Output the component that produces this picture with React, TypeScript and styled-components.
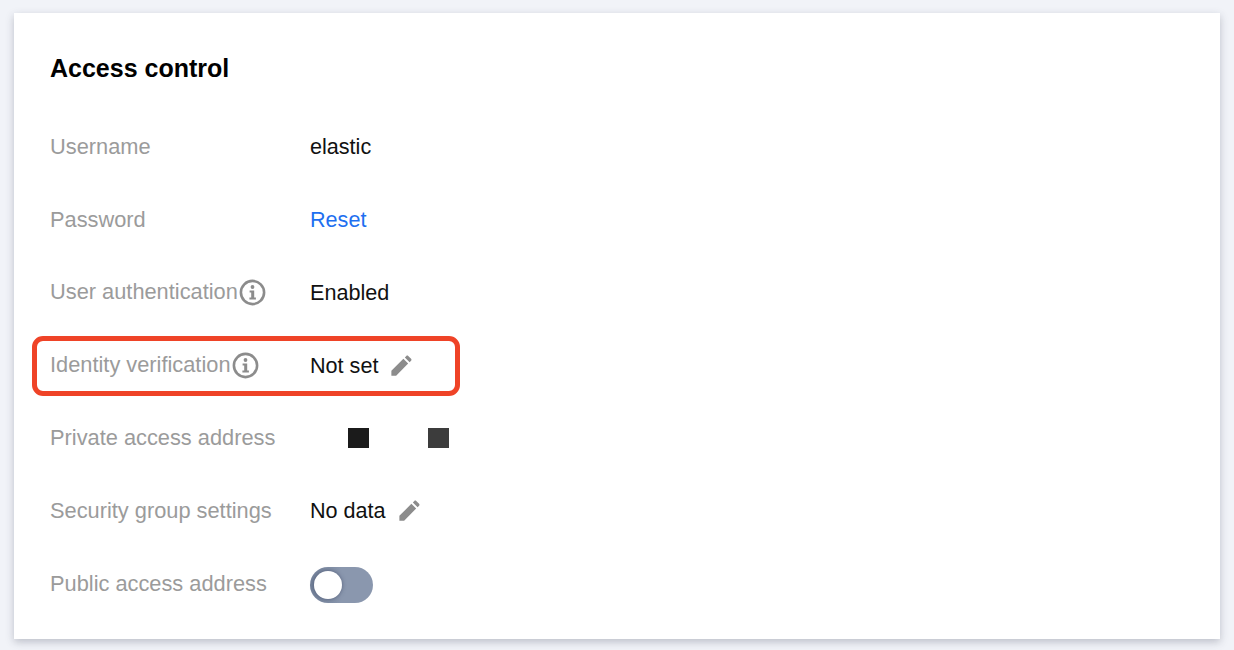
import styled, { createGlobalStyle } from 'styled-components'
import { ReactElement } from 'react'

const GlobalStyle = createGlobalStyle`
  html, body {
    margin: 0;
    height: 100%;
    background: #f1f3f8;
    font-family: "Liberation Sans", Arial, sans-serif;
  }
`

const Page = styled.div`
  width: 1234px;
  height: 650px;
  padding: 13px 14px 11px;
  box-sizing: border-box;
  overflow: hidden;
`

const Card = styled.section`
  position: relative;
  height: 100%;
  box-sizing: border-box;
  padding: 40px 36px 0;
  background: #fff;
  box-shadow: 0 3px 8px rgba(54, 58, 80, 0.28);
`

const Title = styled.h2`
  margin: 0 0 28px;
  font-size: 25px;
  line-height: 30px;
  font-weight: 700;
  color: #000;
`

const Rows = styled.div`
  display: flex;
  flex-direction: column;
`

const Row = styled.div`
  display: flex;
  align-items: center;
  height: 72.8px;
`

const Label = styled.div`
  display: flex;
  align-items: center;
  width: 260px;
  margin-top: -1px;
  font-size: 21.8px;
  line-height: 30px;
  color: #9b9b9b;
`

const Value = styled.div`
  display: flex;
  align-items: center;
  font-size: 21.6px;
  line-height: 30px;
  color: #111;
`

const ResetLink = styled.a`
  color: #1e6ff0;
  text-decoration: none;
`

const PrivateAddress = styled.div`
  display: flex;
  gap: 59px;
  margin: -2px 0 0 38px;
`

const MaskBlock = styled.span<{ $shade: string }>`
  display: block;
  width: 21px;
  height: 20px;
  background: ${p => p.$shade};
`

const Toggle = styled.span`
  position: relative;
  display: block;
  width: 63px;
  height: 36px;
  border-radius: 18px;
  background: linear-gradient(90deg, #74829a 0, #8a97ae 50%);
  margin-top: 2px;
`

const Knob = styled.span`
  position: absolute;
  left: 4px;
  top: 4px;
  width: 28px;
  height: 28px;
  border-radius: 50%;
  background: #fff;
  box-shadow: 0 0 4px rgba(50, 60, 90, 0.6);
`

const Highlight = styled.div`
  position: absolute;
  left: 17.5px;
  top: 323px;
  width: 428.5px;
  height: 60px;
  box-sizing: border-box;
  border: 5px solid #ef4327;
  border-radius: 11px;
  pointer-events: none;
`

const IconSlot = styled.svg<{ $gap: number }>`
  flex: none;
  margin-left: ${p => p.$gap}px;
`

function InfoIcon (): ReactElement {
  return <IconSlot $gap={1} width="27" height="27" viewBox="0 0 27 27">
    <circle cx="13.5" cy="13.5" r="11.6" fill="none" stroke="#8c8c8c" strokeWidth="2.6" />
    <circle cx="13.5" cy="8" r="1.9" fill="#8c8c8c" />
    <path d="M10.6 11.4h4.6v7.2h1.7v2H10.4v-2h1.8v-5.2h-1.6z" fill="#8c8c8c" />
  </IconSlot>
}

function PencilIcon (): ReactElement {
  return <IconSlot $gap={12} width="22" height="22" viewBox="0 0 24 24">
    <path d="M1.5 22.5v-5.2L14.6 4.2l5.2 5.2L6.7 22.5zM16.2 2.6l1.6-1.6c.6-.6 1.5-.6 2.1 0l3.1 3.1c.6.6.6 1.5 0 2.1l-1.6 1.6z" fill="#8c8c8c" />
  </IconSlot>
}

export default function App (): ReactElement {
  return <Page>
    <GlobalStyle />
    <Card>
      <Title>Access control</Title>
      <Rows>
        <Row>
          <Label>Username</Label>
          <Value>elastic</Value>
        </Row>
        <Row>
          <Label>Password</Label>
          <Value><ResetLink href="#">Reset</ResetLink></Value>
        </Row>
        <Row>
          <Label>User authentication<InfoIcon /></Label>
          <Value>Enabled</Value>
        </Row>
        <Row>
          <Label>Identity verification<InfoIcon /></Label>
          <Value>Not set<PencilIcon /></Value>
        </Row>
        <Row>
          <Label>Private access address</Label>
          <PrivateAddress>
            <MaskBlock $shade="#1b1b1b" />
            <MaskBlock $shade="#3c3c3c" />
          </PrivateAddress>
        </Row>
        <Row>
          <Label>Security group settings</Label>
          <Value>No data<PencilIcon /></Value>
        </Row>
        <Row>
          <Label>Public access address</Label>
          <Toggle><Knob /></Toggle>
        </Row>
      </Rows>
      <Highlight />
    </Card>
  </Page>
}
